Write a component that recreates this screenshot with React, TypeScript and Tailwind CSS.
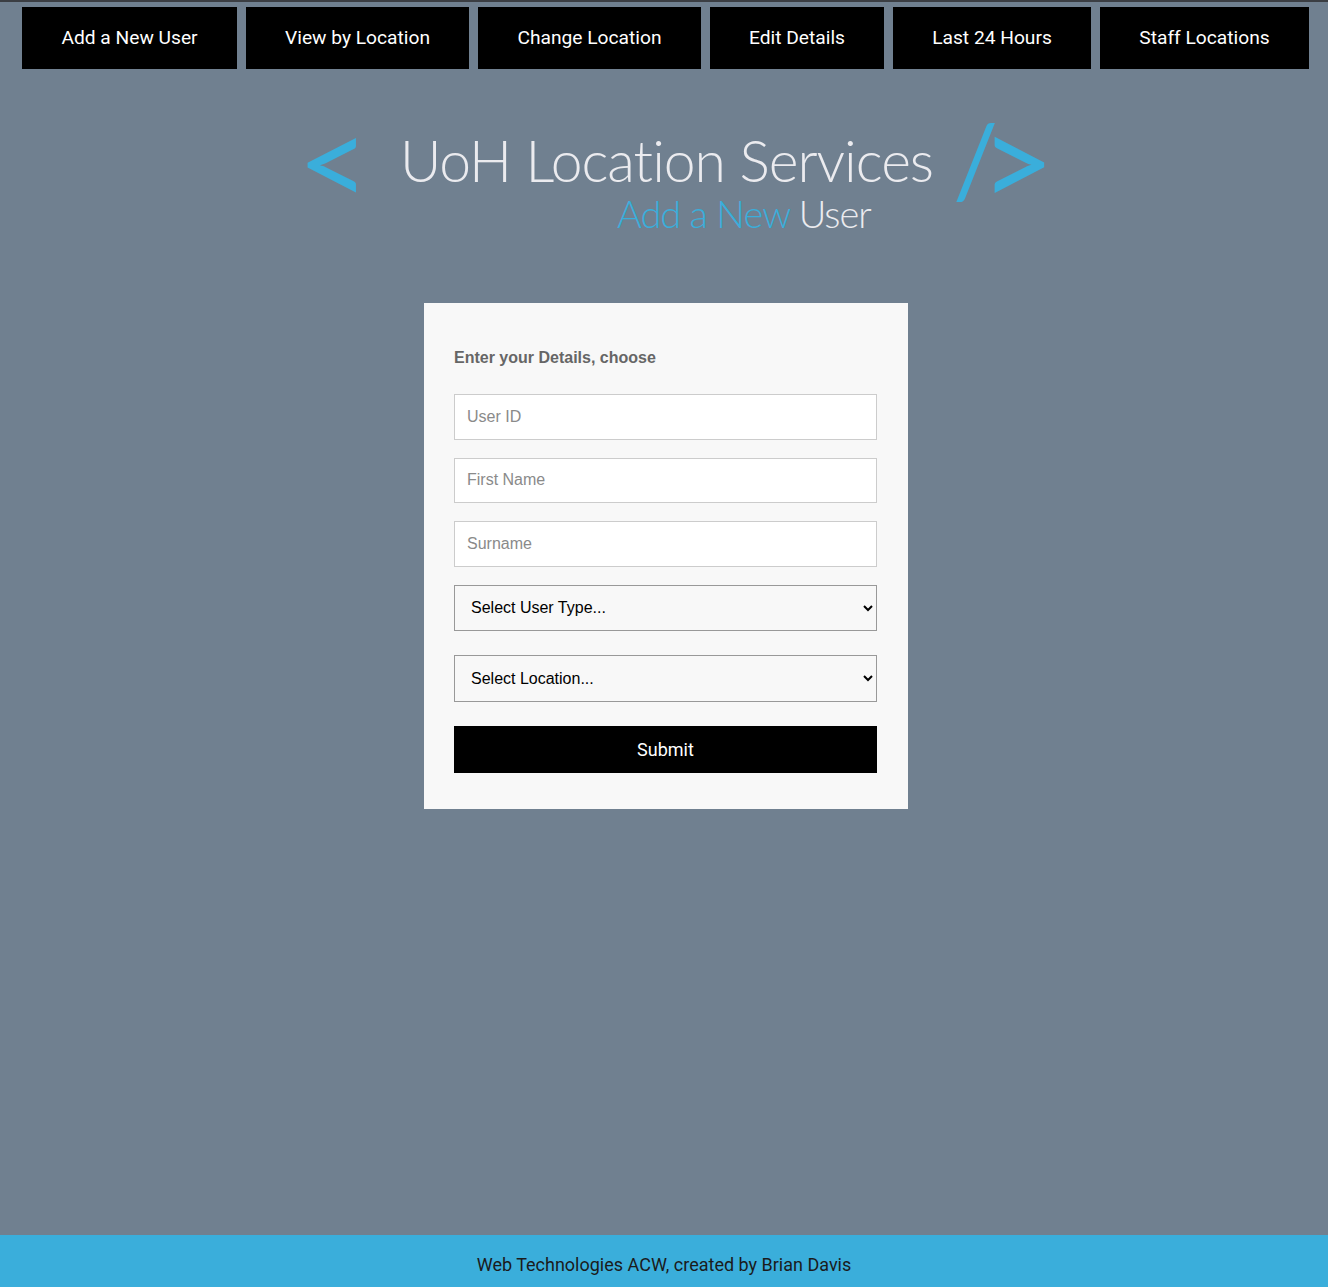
import React, { ReactElement } from 'react';

const navItems = [
  { label: 'Add a New User', w: 'w-[215px]' },
  { label: 'View by Location', w: 'w-[223px]' },
  { label: 'Change Location', w: 'w-[223px]' },
  { label: 'Edit Details', w: 'w-[174px]' },
  { label: 'Last 24 Hours', w: 'w-[198px]' },
  { label: 'Staff Locations', w: 'w-[209px]' },
];

export default function App(): ReactElement {
  return (
    <div className="min-h-screen flex flex-col bg-[#708090]">
      <div className="h-[2px] bg-[#3b3e43]" />
      <nav className="flex flex-row gap-[9px] pl-[22px] pt-[5px]">
        {navItems.map((item) => (
          <a
            key={item.label}
            href="#"
            className={`${item.w} h-[62px] flex items-center justify-center bg-black text-white text-[19.2px] font-['Roboto',sans-serif]`}
          >
            {item.label}
          </a>
        ))}
      </nav>

      <main className="flex-1 flex flex-col items-center">
        <Heading />
        <UserForm />
      </main>

      <footer className="h-[52px] pt-[7px] flex items-center justify-center bg-[#3aaedb] text-[#1b1b1b] text-[18px] font-['Roboto',sans-serif]">
        Web Technologies ACW, created by Brian Davis
      </footer>
    </div>
  );
}

function Heading(): ReactElement {
  return (
    <div className="flex flex-row items-start mt-[63px] ml-[24px] font-['Lato',sans-serif] text-[#3aaedb]">
      <span className="text-[125px] leading-[125px] mt-[-35px] mr-[30px]">&lt;</span>
      <div className="flex flex-col">
        <h1 className="text-[57px] leading-[57px] font-light tracking-[-1px] text-[#ebebef] whitespace-nowrap">
          UoH Location Services
        </h1>
        <h2 className="text-[38px] leading-[38px] font-light tracking-[-1px] pl-[217px] mt-[5px] whitespace-nowrap">
          Add a New <span className="text-[#ebebef]">User</span>
        </h2>
      </div>
      <span className="text-[100px] leading-[100px] mt-[-24px] ml-[20px]">/</span>
      <span className="text-[128px] leading-[128px] mt-[-37px] ml-[-18px]">&gt;</span>
    </div>
  );
}

function UserForm(): ReactElement {
  const input =
    'w-full h-[45.5px] border border-[#cccccc] bg-white px-[12px] text-[16px] text-black placeholder:text-[#8a8a8a] outline-none';
  const select =
    'w-full h-[46.5px] border border-[#999999] bg-[#f8f8f8] pl-[12px] pr-[10px] text-[16px] text-black outline-none';
  return (
    <form className="w-[484px] mt-[71px] ml-[4px] bg-[#f8f8f8] pl-[30px] pr-[31px] pt-[46px] pb-[36px] font-['Liberation_Sans',Arial,sans-serif]">
      <p className="text-[16px] font-bold text-[#666666] leading-[18px]">
        Enter your Details, choose
      </p>
      <div className="flex flex-col gap-[18px] mt-[27px]">
        <input className={input} placeholder="User ID" />
        <input className={input} placeholder="First Name" />
        <input className={input} placeholder="Surname" />
      </div>
      <div className="flex flex-col gap-[24px] mt-[18px]">
        <select className={select} defaultValue="">
          <option value="" disabled>
            Select User Type...
          </option>
          <option>Student</option>
          <option>Staff</option>
        </select>
        <select className={select} defaultValue="">
          <option value="" disabled>
            Select Location...
          </option>
          <option>Library</option>
        </select>
        <button
          type="button"
          className="w-full h-[47px] bg-black text-white text-[18px] font-['Roboto',sans-serif]"
        >
          Submit
        </button>
      </div>
    </form>
  );
}
